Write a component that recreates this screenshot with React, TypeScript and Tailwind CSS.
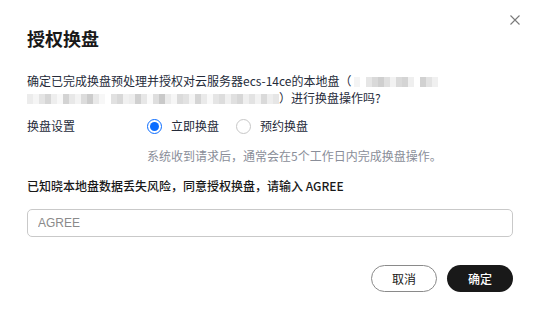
import React, { useState } from "react";

const font = { fontFamily: '"Noto Sans CJK SC", "Noto Sans", sans-serif' };

// pixelated blur used to mask private values
const Mosaic: React.FC<{ cells: string[] }> = ({ cells }) => (
  <span className="inline-flex h-[10px] align-[-1px]">
    {cells.map((c, i) => (
      <span key={i} className="inline-block h-full w-[6px]" style={{ backgroundColor: c }} />
    ))}
  </span>
);

const line1 = ["#f4f4f4", "#ffffff", "#e6e6e6", "#d9d9d9", "#cfcfcf", "#e0e0e0", "#f2f2f2", "#dadada", "#d4d4d4", "#efefef", "#ffffff", "#d1d1d1", "#e3e3e3", "#f0f0f0"];
const line2 = ["#ececec", "#f5f5f5", "#e4e4e4", "#d6d6d6", "#eeeeee", "#f8f8f8", "#d3d3d3", "#e8e8e8", "#f3f3f3", "#dcdcdc", "#cccccc", "#e9e9e9", "#f7f7f7", "#ffffff", "#e1e1e1", "#d8d8d8", "#f1f1f1", "#ededed", "#d0d0d0", "#e7e7e7", "#fafafa", "#dedede", "#c9c9c9", "#ebebeb", "#f6f6f6", "#dbdbdb", "#e2e2e2", "#f4f4f4", "#d5d5d5", "#eaeaea", "#f9f9f9", "#e5e5e5", "#dddddd", "#f0f0f0", "#e0e0e0", "#d7d7d7", "#efefef", "#e3e3e3", "#f2f2f2", "#dadada", "#eeeeee", "#e6e6e6"];

const Radio: React.FC<{ checked: boolean; label: string; onClick: () => void }> = ({ checked, label, onClick }) => (
  <button type="button" onClick={onClick} className="flex items-center gap-[9px]">
    <span
      className={
        checked
          ? "flex h-[15px] w-[15px] items-center justify-center rounded-full border border-[#0a6cff]"
          : "h-[15px] w-[15px] rounded-full border border-[#c7c7c7]"
      }
    >
      {checked && <span className="h-[9px] w-[9px] rounded-full bg-[#0a6cff]" />}
    </span>
    <span className="text-[12px] text-[#252b3a]">{label}</span>
  </button>
);

export default function App() {
  const [mode, setMode] = useState<"now" | "later">("now");
  const [value, setValue] = useState("");

  return (
    <div className="h-[317px] w-[539px] bg-white" style={font}>
      <div className="relative px-[27px] pt-[26px] pr-[26px]">
        <button type="button" className="absolute right-[19px] top-[15px] text-[#7a7a7a]">
          <svg width="10" height="10" viewBox="0 0 10 10" fill="none" stroke="currentColor" strokeWidth="1.1">
            <path d="M0.5 0.5 L9.5 9.5 M9.5 0.5 L0.5 9.5" />
          </svg>
        </button>

        <h1 className="text-[18px] font-bold leading-[24px] text-[#191919]">授权换盘</h1>

        <p className="mt-[22px] text-[12px] leading-[17px] text-[#252b3a]">
          确定已完成换盘预处理并授权对云服务器ecs-14ce的本地盘（ <Mosaic cells={line1} />
          <br />
          <Mosaic cells={line2} />）进行换盘操作吗?
        </p>

        <div className="mt-[10px] flex h-[20px] items-center">
          <span className="w-[120px] text-[12px] text-[#252b3a]">换盘设置</span>
          <div className="flex items-center gap-[17px]">
            <Radio checked={mode === "now"} label="立即换盘" onClick={() => setMode("now")} />
            <Radio checked={mode === "later"} label="预约换盘" onClick={() => setMode("later")} />
          </div>
        </div>

        <p className="mt-[11px] pl-[120px] text-[12px] leading-[18px] text-[#8a8e99]">
          系统收到请求后，通常会在5个工作日内完成换盘操作。
        </p>

        <p className="mt-[12px] text-[12px] font-medium leading-[18px] text-[#191919]">
          已知晓本地盘数据丢失风险，同意授权换盘，请输入 AGREE
        </p>

        <input
          value={value}
          onChange={(e) => setValue(e.target.value)}
          placeholder="AGREE"
          className="mt-[14px] h-[28px] w-full rounded-[5px] border border-[#c9c9c9] px-[10px] text-[12px] text-[#252b3a] outline-none placeholder:text-[#8a8a8a]"
          style={{ fontFamily: '"Liberation Sans", Arial, sans-serif' }}
        />

        <div className="mt-[28px] flex justify-end gap-[10px]">
          <button
            type="button"
            className="h-[27px] w-[66px] rounded-full border border-[#8a8a8a] text-[12px] text-[#191919]"
          >
            取消
          </button>
          <button
            type="button"
            className="h-[27px] w-[66px] rounded-full bg-[#191919] text-[12px] font-medium text-white"
          >
            确定
          </button>
        </div>
      </div>
    </div>
  );
}
